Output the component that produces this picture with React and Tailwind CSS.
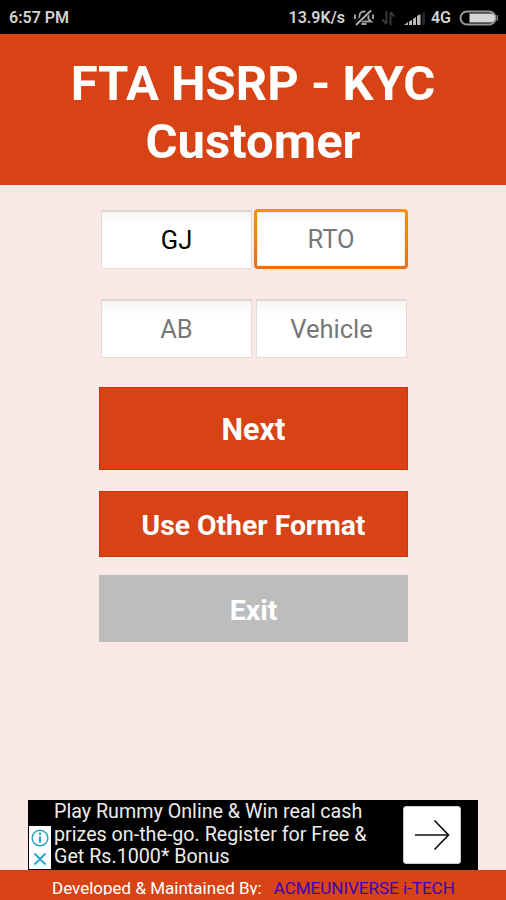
import React from 'react';

const adLines = [
  'Play Rummy Online & Win real cash',
  'prizes on-the-go. Register for Free &',
  'Get Rs.1000* Bonus',
];

function StatusBar() {
  return (
    <div className="h-[34px] bg-black flex items-center pl-[9px] pr-[7px] pt-[2px] text-[#d2d2d2] text-[16px] font-semibold whitespace-nowrap">
      <span className="flex-1">6:57 PM</span>
      <span>13.9K/s</span>
      <svg className="ml-[8px] w-[22px] h-[18px]" viewBox="0 0 22 18" fill="none" stroke="#a0a0a0" strokeWidth="2">
        <path d="M4 12.5L6.500 10V7a4.500 4.500 0 0 1 9 0v3l2.500 2.500zM8.500 15h5" />
        <path d="M17.500 1L2.500 16" stroke="#000" strokeWidth="4.500" />
        <path d="M18 1.5L3 16" stroke="#b5b5b5" strokeWidth="1.8" />
        <path d="M2 5.500v4.500M20 5.500v4.500" strokeWidth="2" />
      </svg>
      <svg className="ml-[6px] w-[15px] h-[16px]" viewBox="0 0 15 16" fill="none" stroke="#393939" strokeWidth="2">
        <path d="M5.5 1v12M1.500 9.500l4 4.500M9.5 15V3M13.500 6.500L9.5 2" />
      </svg>
      <svg className="ml-[8px] w-[22px] h-[16px]" viewBox="0 0 22 16" fill="#b9b9b9">
        <path d="M0 15l4-3v3zM5 15v-3.500l3-1.800V15zM9 15V9l3-2v8zM13 15V6l3.500-2V15z" />
        <path d="M18 15V3.5L21 1v14z" fill="#242424" />
      </svg>
      <span className="ml-[5px]">4G</span>
      <svg className="ml-[8px] w-[40px] h-[17px]" viewBox="0 0 40 17" fill="none">
        <rect x="1.5" y="1.500" width="35" height="13" rx="6.500" stroke="#9a9a9a" strokeWidth="2" />
        <path d="M10.500 3.500h21a4.500 4.500 0 0 1 0 9h-21z" fill="#d5d5d5" />
        <path d="M38.3 5v6" stroke="#777" strokeWidth="1.500" />
      </svg>
    </div>
  );
}

function Field({ value, placeholder }) {
  return (
    <input
      type="text"
      defaultValue={value}
      placeholder={placeholder}
      className="w-[151px] h-[59px] border border-[#e7d9d6] border-t-2 border-t-[#dfd4d1] bg-linear-to-b from-[#f4f4f3] to-white to-25% text-center text-[25.5px] text-black placeholder:text-[#777] outline-none"
    />
  );
}

function ActiveField({ placeholder }) {
  return (
    <div className="w-[154px] h-[60px] rounded-[4px] bg-linear-to-b from-[#f3920f] to-[#ea6d13] p-[3px]">
      <input
        type="text"
        placeholder={placeholder}
        className="block w-full h-full rounded-[1px] border border-[#fff0e0] bg-linear-to-b from-[#f6f6f6] to-white to-25% text-center text-[25.5px] placeholder:text-[#777] outline-none"
      />
    </div>
  );
}

function AdBanner() {
  return (
    <div className="mx-auto w-[450px] h-[70px] bg-black flex">
      <div className="w-[23px] flex flex-col justify-end pl-[1px]">
        <div className="h-[43px] mb-[1px] bg-white flex flex-col items-center justify-around">
          <svg className="w-[18px] h-[18px]" viewBox="0 0 18 18" fill="none" stroke="#27a5c4">
            <circle cx="9" cy="9" r="7.800" strokeWidth="1.500" />
            <path d="M9 7.500v6M9 3.800v2.200" strokeWidth="2.200" />
          </svg>
          <svg className="w-[14px] h-[14px]" viewBox="0 0 14 14" fill="none" stroke="#27a5c4" strokeWidth="1.900">
            <path d="M1.500 1.500l11 11M12.500 1.500l-11 11" />
          </svg>
        </div>
      </div>
      <div className="flex-1 pl-[3px] pt-[1px] text-[19.7px] leading-[22.5px] text-[#ececec] whitespace-nowrap">
        {adLines.map((line) => (
          <p key={line}>{line}</p>
        ))}
      </div>
      <button type="button" className="mt-[6px] mr-[17px] w-[58px] h-[58px] rounded-[3px] border border-[#ccc] bg-white flex items-center justify-center">
        <svg className="w-[36px] h-[32px]" viewBox="0 0 36 32" fill="none" stroke="#111" strokeWidth="1.700">
          <path d="M1 16h33M20.500 1.500L34.500 16 20.500 30.500" />
        </svg>
      </button>
    </div>
  );
}

export default function App() {
  return (
    <div className="w-[506px] h-[900px] bg-[#fbe9e7] font-['Roboto',sans-serif] flex flex-col overflow-hidden">
      <StatusBar />
      <header className="h-[151px] bg-[#d84315] text-white text-center font-bold text-[49px] leading-[58px] pt-[21px]">
        <h1>
          FTA HSRP - KYC
          <br />
          Customer
        </h1>
      </header>

      <main className="flex-1 flex flex-col">
        <div className="mt-[24px] h-[60px] ml-[101px] flex items-center gap-[2px]">
          <Field value="GJ" />
          <ActiveField placeholder="RTO" />
        </div>
        <div className="mt-[30px] ml-[101px] flex gap-[4px]">
          <Field placeholder="AB" />
          <Field placeholder="Vehicle" />
        </div>
        <div className="ml-[99px] w-[309px] mt-[29px] flex flex-col text-white font-bold">
          <button type="button" className="h-[83px] bg-[#d84315] border border-[#d33010] text-[30.5px] pt-[3px]">Next</button>
          <button type="button" className="mt-[21px] h-[66px] bg-[#d84315] border border-[#d33010] text-[28.3px] pt-[5px]">Use Other Format</button>
          <button type="button" className="mt-[18px] h-[67px] bg-[#bdbdbd] text-[28.5px] pt-[5px]">Exit</button>
        </div>
      </main>

      <AdBanner />
      {/* the bar is too short for the text, so its descenders are clipped */}
      <footer className="h-[30px] bg-[#d84315] pt-[8px] pl-[52px] text-[17px] text-white whitespace-nowrap">
        <div className="h-[17px] overflow-hidden flex leading-[20px]">
          <span>Developed &amp; Maintained By:</span>
          <a className="ml-[12px] text-[#3a05b5]">ACMEUNIVERSE i-TECH</a>
        </div>
      </footer>
    </div>
  );
}
